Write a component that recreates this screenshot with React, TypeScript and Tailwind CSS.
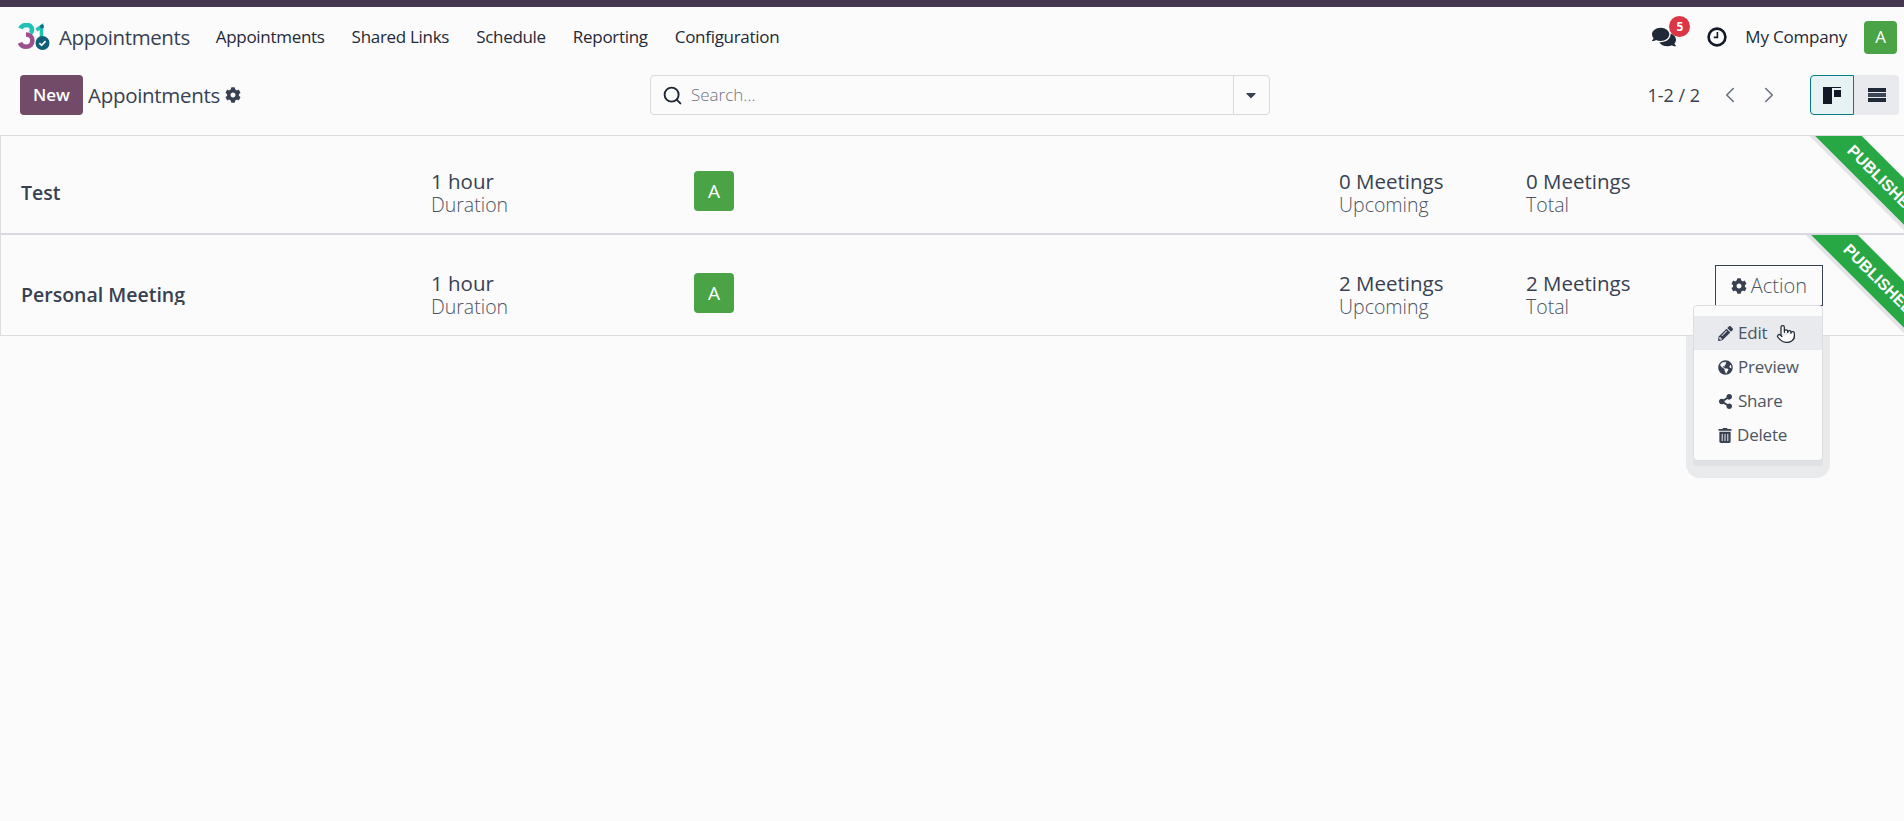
import { ChevronLeft, ChevronRight, Pointer, Search } from "lucide-react";
import { FaCaretDown, FaCog, FaComments, FaGlobeAmericas, FaPencilAlt, FaShareAlt, FaTrashAlt } from "react-icons/fa";

const navItems = ["Appointments", "Shared Links", "Schedule", "Reporting", "Configuration"];

function Logo() {
  return (
    <svg width="32" height="28" viewBox="0 0 32 28" fill="none">
      <path d="M2.5 5.5C3.5 2.8 6 2 8.5 2c3.2 0 5.5 1.8 5.5 4.7 0 1.4-.6 2.7-1.7 3.5" stroke="#1fc2b4" strokeWidth="4.6" />
      <path d="M8 11.5c3.4 0 6.4 1.8 6.4 6 0 3.6-2.6 6.3-6.4 6.3-3 0-5.2-1.6-6-4" stroke="#9b4f8c" strokeWidth="4.6" />
      <path d="M18.5 7l5-3.5V15" stroke="#1fc2b4" strokeWidth="3.6" />
      <circle cx="24" cy="3.5" r="2" fill="#0f6f86" />
      <circle cx="24.5" cy="20" r="7" fill="#0f5f78" />
      <path d="M21.4 20.2l2.2 2.2 4-4.2" stroke="#fff" strokeWidth="1.7" />
    </svg>
  );
}

function ClockIcon() {
  return (
    <svg width="20" height="20" viewBox="0 0 20 20" fill="none" className="ml-[31px]">
      <circle cx="10" cy="10" r="8.4" stroke="#111827" strokeWidth="2.6" />
      <path d="M10.4 5v5.4H6.8" stroke="#111827" strokeWidth="1.6" />
    </svg>
  );
}

function Avatar({ size }: { size: "sm" | "lg" }) {
  return (
    <div
      className={
        size === "lg"
          ? "flex h-[40px] w-[40px] items-center justify-center rounded-[4px] bg-[#4aa345] text-[19px] font-medium text-white"
          : "flex h-[33px] w-[33px] items-center justify-center rounded-[4px] bg-[#4aa345] text-[17px] text-white"
      }
    >
      A
    </div>
  );
}

function Stat({ value, label, className }: { value: string; label: string; className: string }) {
  return (
    <div className={className}>
      <div className="text-[20.5px] leading-[23px] text-[#374151]">{value}</div>
      <div className="text-[19.5px] leading-[23px] font-light text-[#4b5563]">{label}</div>
    </div>
  );
}

function Ribbon({ shift }: { shift: string }) {
  return (
    <div
      className={`absolute top-[25px] h-[33px] w-[200px] rotate-45 bg-[#28a745] pl-[8px] text-center text-[16px] leading-[33px] font-bold text-white shadow-[0_4px_0_#e4e4e8] ${shift}`}
      style={{ fontFamily: '"Liberation Sans", sans-serif' }}
    >
      PUBLISHED
    </div>
  );
}

function Row({ name, meetings, shift, className, clipName }: { name: string; meetings: string; shift: string; className: string; clipName?: boolean }) {
  return (
    <div className={`relative flex overflow-hidden pl-[20px] ${className}`}>
      <div className="w-[410px] shrink-0 pt-[9px]">
        <div className={clipName ? "h-[24px] overflow-hidden text-[19.5px] leading-[27px] font-semibold text-[#374151]" : "text-[19.5px] leading-[27px] font-semibold text-[#374151]"}>
          {name}
        </div>
      </div>
      <Stat value="1 hour" label="Duration" className="w-[263px] shrink-0" />
      <div className="w-[645px] shrink-0 pt-[1px]">
        <Avatar size="lg" />
      </div>
      <Stat value={`${meetings} Meetings`} label="Upcoming" className="w-[187px] shrink-0" />
      <Stat value={`${meetings} Meetings`} label="Total" className="w-[150px] shrink-0" />
      <Ribbon shift={shift} />
    </div>
  );
}

export default function App() {
  return (
    <div className="relative min-h-[821px] bg-[#fbfbfb] text-[#374151]" style={{ fontFamily: '"Open Sans", "Noto Sans", sans-serif' }}>
      <div className="h-[7px] bg-[#443850]" />

      <header className="flex h-[60px] items-center pr-[7px] pl-[18px]">
        <Logo />
        <span className="ml-[9px] text-[20.5px] tracking-[-0.4px] text-[#374151]">Appointments</span>
        <nav className="ml-[26px] flex gap-[27px] text-[17px] tracking-[-0.3px] text-[#1f2937]">
          {navItems.map((item) => (
            <span key={item}>{item}</span>
          ))}
        </nav>
        <div className="ml-auto flex items-center">
          <div className="relative">
            <FaComments className="h-[24px] w-[24px] text-[#1f2937]" />
            <span className="absolute -top-[9px] -right-[14px] flex h-[21px] w-[21px] items-center justify-center rounded-full bg-[#dc3545] text-[12px] font-bold text-white">5</span>
          </div>
          <ClockIcon />
          <span className="ml-[18px] text-[17px] tracking-[-0.2px] text-[#1f2937]">My Company</span>
          <div className="ml-[17px]">
            <Avatar size="sm" />
          </div>
        </div>
      </header>

      <div className="flex h-[68px] items-start pt-[8px] pr-[5px] pl-[20px]">
        <button className="h-[40px] w-[63px] rounded-[4px] bg-[#714b67] text-[17px] font-semibold text-white">New</button>
        <span className="ml-[5px] text-[20.5px] leading-[40px] tracking-[-0.3px] text-[#374151]">Appointments</span>
        <FaCog className="mt-[12px] ml-[5px] h-[16px] w-[16px] text-[#374151]" />
        <div className="ml-[409px] flex h-[40px] w-[620px] items-center rounded-[4px] border border-[#d8dadd]">
          <Search className="ml-[11px] h-[21px] w-[21px] text-[#1f2937]" strokeWidth={2.2} />
          <span className="ml-[8px] text-[17px] font-light text-[#6b7280]">Search...</span>
          <div className="ml-auto flex h-full w-[36px] items-center justify-center border-l border-[#d8dadd]">
            <FaCaretDown className="h-[16px] w-[16px] text-[#374151]" />
          </div>
        </div>
        <span className="ml-auto text-[18px] leading-[40px] text-[#374151]">1-2 / 2</span>
        <ChevronLeft className="mt-[7px] ml-[17px] h-[26px] w-[26px] text-[#6b7280]" strokeWidth={1.5} />
        <ChevronRight className="mt-[7px] ml-[13px] h-[26px] w-[26px] text-[#6b7280]" strokeWidth={1.5} />
        <div className="ml-[28px] flex">
          <button className="flex h-[40px] w-[44px] items-center justify-center rounded-l-[4px] border border-[#017e84] bg-[#e6f2f3]">
            <span className="flex items-start gap-[2px] border-t border-[#111827]">
              <span className="h-[16px] w-[9px] bg-[#111827]" />
              <span className="mt-[2px] h-[7px] w-[7px] bg-[#111827]" />
            </span>
          </button>
          <button className="flex h-[40px] w-[45px] flex-col items-center justify-center gap-[1px] rounded-r-[4px] bg-[#e9eaed]">
            <span className="h-[4px] w-[18px] bg-[#1f2937]" />
            <span className="h-[4px] w-[18px] bg-[#3d4657]" />
            <span className="h-[4px] w-[18px] bg-[#1f2937]" />
          </button>
        </div>
      </div>

      <div className="border-y border-l border-[#dcdde0]">
        <Row name="Test" meetings="0" shift="right-[-76px]" className="h-[99px] border-b-2 border-[#d8d8de] pt-[34px]" />
        <Row name="Personal Meeting" meetings="2" shift="right-[-72px]" clipName className="h-[100px] pt-[37px]" />
      </div>

      {/* open menu for the second card */}
      <div className="absolute top-[265px] left-[1715px] flex h-[41px] w-[108px] items-center justify-center gap-[4px] border border-[#374151] bg-[#fbfbfb] text-[20px] font-light text-[#4b5563]">
        <FaCog className="h-[16px] w-[16px] text-[#374151]" />
        Action
      </div>
      <div className="absolute top-[336px] left-[1686px] h-[142px] w-[144px] rounded-b-[14px] bg-[#e9eaec]" />
      <div className="absolute top-[305px] left-[1693px] h-[156px] w-[130px] rounded-[4px] border border-[#dcdde0] bg-[#fbfbfb] pt-[10px] text-[17px] tracking-[-0.2px] text-[#4b5563] shadow-[0_5px_0_#e0e1e4]">
        {[
          { label: "Edit", icon: <FaPencilAlt className="h-[15px] w-[15px] text-[#374151]" />, active: true },
          { label: "Preview", icon: <FaGlobeAmericas className="h-[15px] w-[15px] text-[#374151]" /> },
          { label: "Share", icon: <FaShareAlt className="h-[15px] w-[15px] text-[#374151]" /> },
          { label: "Delete", icon: <FaTrashAlt className="h-[15px] w-[14px] text-[#374151]" /> },
        ].map((item) => (
          <div key={item.label} className={item.active ? "flex h-[34px] items-center gap-[5px] bg-[#e9eaed] pl-[24px]" : "flex h-[34px] items-center gap-[5px] pl-[24px]"}>
            {item.icon}
            {item.label}
          </div>
        ))}
      </div>
      <Pointer className="absolute top-[321px] left-[1776px] h-[26px] w-[20px] fill-white text-[#1f2937]" strokeWidth={1.5} />
    </div>
  );
}
